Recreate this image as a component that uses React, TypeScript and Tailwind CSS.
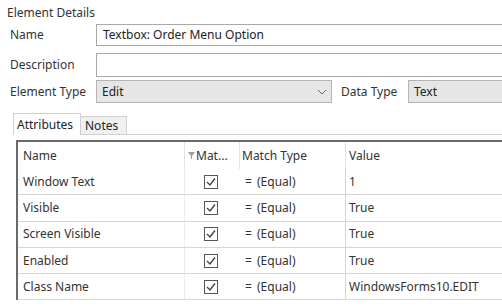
import React from 'react';

type Row = { name: string; value: string };

const rows: Row[] = [
  { name: 'Window Text', value: '1' },
  { name: 'Visible', value: 'True' },
  { name: 'Screen Visible', value: 'True' },
  { name: 'Enabled', value: 'True' },
  { name: 'Class Name', value: 'WindowsForms10.EDIT' },
];

const CheckBox: React.FC = () => (
  <svg width="14" height="14" viewBox="0 0 14 14">
    <rect x="0.5" y="0.5" width="13" height="13" fill="white" stroke="#555" />
    <path d="M3 7 L6 10 L11 3.5" fill="none" stroke="#444" strokeWidth="1.4" />
  </svg>
);

export default function App() {
  return (
    <div
      className="w-[502px] h-[308px] overflow-hidden bg-white text-[12px] text-[#333]"
      style={{ fontFamily: '"Noto Sans", "Open Sans", sans-serif' }}
    >
      {/* Details */}
      <div className="pl-[7px] pt-[4px] leading-[18px]">Element Details</div>

      <div className="flex items-center h-[22px] mt-[2px] pl-[10px]">
        <span className="w-[86px]">Name</span>
        <div className="flex-1 h-[22px] -mr-[4px] border border-[#a8a8a8] flex items-center pl-[6px] text-[#222]">
          Textbox: Order Menu Option
        </div>
      </div>

      <div className="flex items-center h-[24px] mt-[7px] pl-[10px]">
        <span className="w-[86px]">Description</span>
        <div className="flex-1 h-[24px] -mr-[4px] border border-[#a8a8a8]" />
      </div>

      <div className="flex items-center h-[23px] mt-[3px] pl-[10px]">
        <span className="w-[86px]">Element Type</span>
        <div className="w-[236px] h-[23px] border border-[#b4b4b4] bg-[#e6e6e6] flex items-center pl-[5px] pr-[4px] text-[#222]">
          <span className="flex-1">Edit</span>
          <svg width="10" height="6" viewBox="0 0 10 6">
            <path d="M1 1 L5 5 L9 1" fill="none" stroke="#666" strokeWidth="1" />
          </svg>
        </div>
        <span className="ml-[9px] w-[67px]">Data Type</span>
        <div className="flex-1 h-[23px] -mr-[4px] border border-[#b4b4b4] bg-[#e6e6e6] flex items-center pl-[5px] text-[#222]">
          Text
        </div>
      </div>

      {/* Tabs */}
      <div className="flex items-end h-[22px] mt-[10px] pl-[13px]">
        <div className="h-[22px] w-[68px] border border-b-0 border-[#d0d0d0] bg-white flex items-center pl-[3px] text-[#222]">
          Attributes
        </div>
        <div className="h-[19px] w-[46px] border border-l-0 border-[#d0d0d0] bg-[#f0f0f0] flex items-center pl-[4px] text-[#222]">
          Notes
        </div>
        <div className="flex-1 border-b border-[#d0d0d0]" />
      </div>

      {/* Table */}
      <div className="ml-[16px] mt-[5px] border-l-2 border-t-2 border-[#6a6a6a]">
        <div className="flex h-[27px] items-center">
          <div className="w-[166px] pl-[5px]">Name</div>
          <div className="w-[55px] h-full border-l border-[#e2e2e2] flex items-center pl-[3px]">
            <svg width="7" height="7" viewBox="0 0 7 7" className="mr-[1px]">
              <path d="M0 0 H7 L4 4 V7 L3 7 V4 Z" fill="#9a9a9a" />
            </svg>
            Mat...
          </div>
          <div className="w-[106px] h-full border-l border-[#e2e2e2] flex items-center pl-[2px]">Match Type</div>
          <div className="flex-1 h-full border-l border-[#e2e2e2] flex items-center pl-[3px]">Value</div>
        </div>
        {rows.map((r) => (
          <div key={r.name} className="flex h-[26.3px] items-center border-b border-[#d6d6d6]">
            <div className="w-[166px] pl-[5px]">{r.name}</div>
            <div className="w-[55px] h-full border-l border-[#ececec] flex items-center justify-center pr-[2px]">
              <CheckBox />
            </div>
            <div className="w-[106px] h-full flex items-center pl-[6px]">
              <span className="w-[12px]">=</span>
              <span>(Equal)</span>
            </div>
            <div className="flex-1 h-full border-l border-[#d6d6d6] flex items-center pl-[3px]">{r.value}</div>
          </div>
        ))}
      </div>
    </div>
  );
}
